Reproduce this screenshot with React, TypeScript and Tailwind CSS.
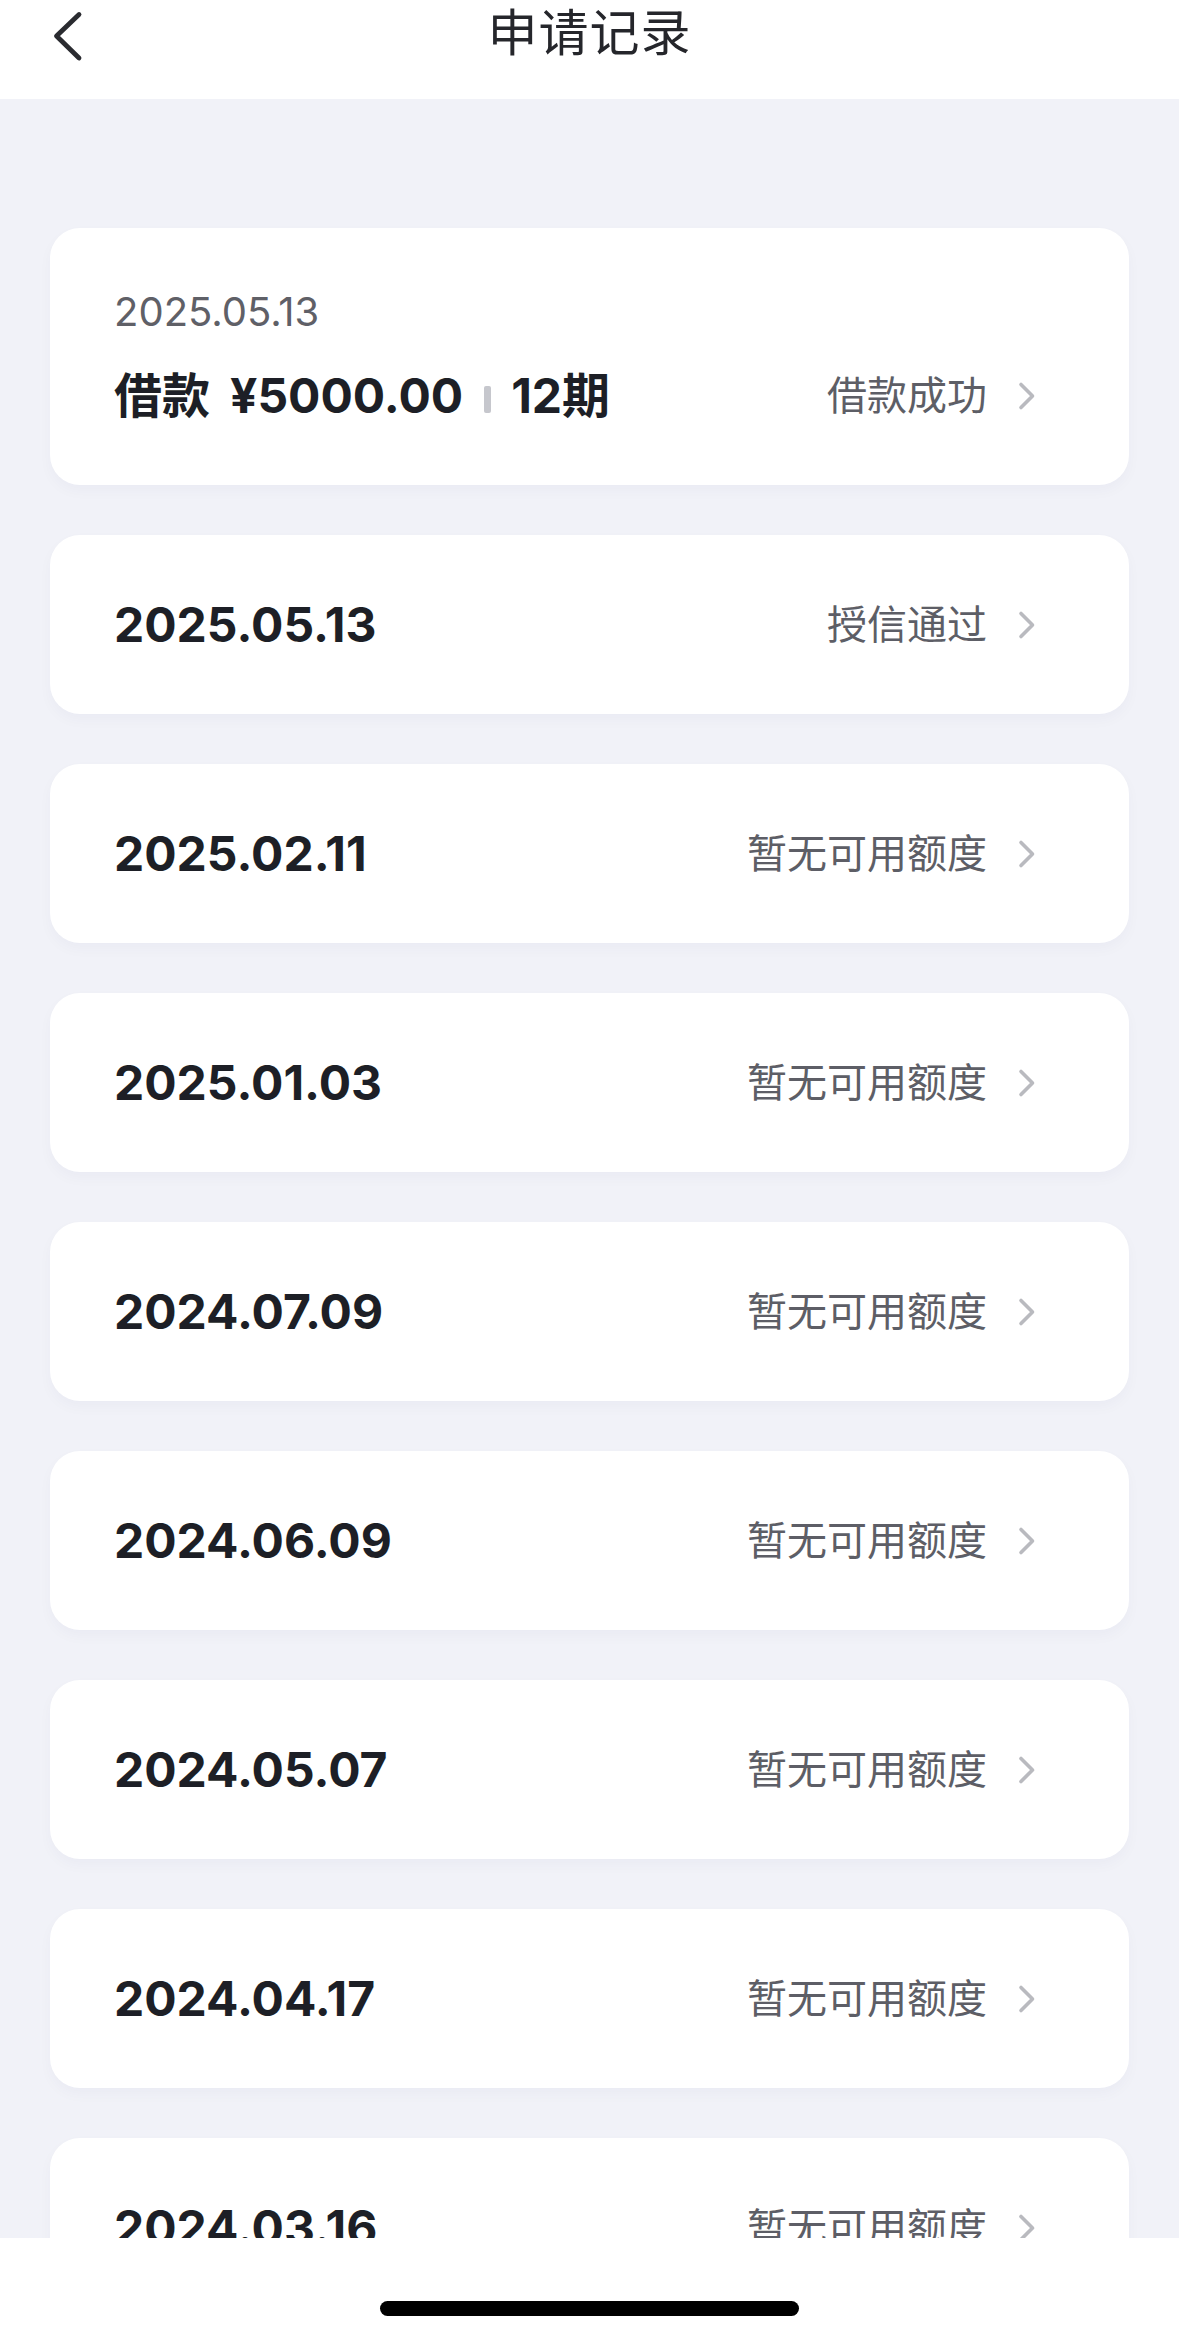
const FONT = "font-['Inter','Noto_Sans_CJK_SC',sans-serif]";

type Row = { date: string; status: string };

const rows: Row[] = [
  { date: '2025.05.13', status: '授信通过' },
  { date: '2025.02.11', status: '暂无可用额度' },
  { date: '2025.01.03', status: '暂无可用额度' },
  { date: '2024.07.09', status: '暂无可用额度' },
  { date: '2024.06.09', status: '暂无可用额度' },
  { date: '2024.05.07', status: '暂无可用额度' },
  { date: '2024.04.17', status: '暂无可用额度' },
  { date: '2024.03.16', status: '暂无可用额度' },
];

function Chevron() {
  return (
    <svg width="20" height="30" viewBox="0 0 20 30" fill="none" className="shrink-0">
      <path d="M4 3.5 L15.5 15 L4 26.5" stroke="#b9babf" strokeWidth="3.6" strokeLinecap="round" strokeLinejoin="round" />
    </svg>
  );
}

function Status({ text }: { text: string }) {
  return (
    <div className="flex items-center gap-[30px] shrink-0">
      <span className="text-[40px] leading-none text-[#5d5e66]">{text}</span>
      <Chevron />
    </div>
  );
}

export default function App() {
  return (
    <div className={`w-[1179px] h-[2340px] flex flex-col overflow-hidden bg-[#f1f2f8] ${FONT}`}>
      {/* 顶部导航 */}
      <header className="relative h-[99px] shrink-0 bg-white flex justify-center">
        <svg width="40" height="60" viewBox="0 0 40 60" fill="none" className="absolute left-[48px] top-[6px]">
          <path d="M31 8.5 L8.5 30 L31 52" stroke="#2a2b30" strokeWidth="4.8" strokeLinecap="round" strokeLinejoin="round" />
        </svg>
        <h1 className="mt-[3px] text-[50px] leading-[60px] font-normal text-[#25262b] tracking-[1px]">申请记录</h1>
      </header>

      {/* 列表 */}
      <main className="flex-1 min-h-0 overflow-hidden px-[50px] pt-[129px] flex flex-col gap-[50px]">
        <div className="shrink-0 bg-white rounded-[30px] shadow-[0_6px_14px_rgba(40,45,90,0.03)] pl-[64px] pr-[92px] pt-[63px] pb-[61px]">
          <div className="text-[40px] leading-[41px] text-[#5f6067]">2025.05.13</div>
          <div className="mt-[36px] flex items-center justify-between">
            <div className="flex items-center text-[48px] leading-[56px] font-bold text-[#1d1f26]">
              <span>借款</span>
              <span className="ml-[20px]">¥5000.00</span>
              <span className="ml-[21px] mr-[20px] w-[7px] h-[27px] rounded-[2px] bg-[#c6c7cd] translate-y-[3px]" />
              <span>12期</span>
            </div>
            <Status text="借款成功" />
          </div>
        </div>

        {rows.map((r) => (
          <div
            key={r.date + r.status}
            className="shrink-0 h-[179px] bg-white rounded-[30px] shadow-[0_6px_14px_rgba(40,45,90,0.03)] pl-[64px] pr-[92px] flex items-center justify-between"
          >
            <span className="text-[48px] leading-none font-bold text-[#1d1f26]">{r.date}</span>
            <Status text={r.status} />
          </div>
        ))}
      </main>

      {/* 底部横条 */}
      <footer className="h-[102px] shrink-0 bg-white flex justify-center pt-[63px]">
        <div className="w-[419px] h-[15px] rounded-full bg-black" />
      </footer>
    </div>
  );
}
